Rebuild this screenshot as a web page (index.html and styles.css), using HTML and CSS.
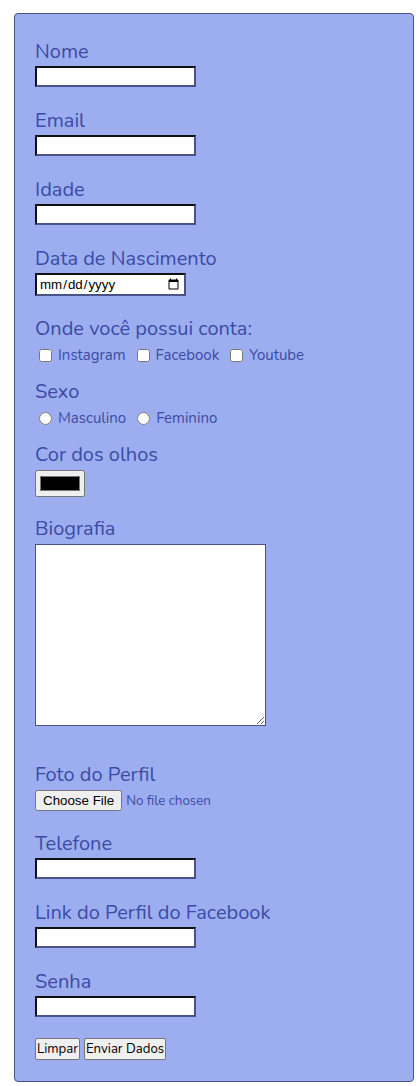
FILE: index.html
```html
<!DOCTYPE html>
<html lang="pt-BR">
<head>
<meta charset="utf-8">
<title>Formulário</title>
<link rel="stylesheet" href="styles.css">
</head>
<body>
<form class="card">
  <div class="field">
    <label class="lbl" for="nome">Nome</label>
    <input class="txt" id="nome" type="text">
  </div>
  <div class="field">
    <label class="lbl" for="email">Email</label>
    <input class="txt" id="email" type="email">
  </div>
  <div class="field">
    <label class="lbl" for="idade">Idade</label>
    <input class="txt" id="idade" type="number">
  </div>
  <div class="field field-date">
    <label class="lbl" for="nasc">Data de Nascimento</label>
    <input class="date" id="nasc" type="date">
  </div>
  <div class="field field-opts">
    <span class="lbl">Onde você possui conta:</span>
    <div class="opts">
      <label class="opt"><input type="checkbox">Instagram</label>
      <label class="opt"><input type="checkbox">Facebook</label>
      <label class="opt"><input type="checkbox">Youtube</label>
    </div>
  </div>
  <div class="field field-opts">
    <span class="lbl">Sexo</span>
    <div class="opts">
      <label class="opt"><input type="radio" name="sexo">Masculino</label>
      <label class="opt"><input type="radio" name="sexo">Feminino</label>
    </div>
  </div>
  <div class="field field-color">
    <label class="lbl" for="cor">Cor dos olhos</label>
    <input class="color" id="cor" type="color" value="#000000">
  </div>
  <div class="field field-bio">
    <label class="lbl" for="bio">Biografia</label>
    <textarea class="bio" id="bio"></textarea>
  </div>
  <div class="field field-file">
    <label class="lbl" for="foto">Foto do Perfil</label>
    <input class="file" id="foto" type="file">
  </div>
  <div class="field">
    <label class="lbl" for="tel">Telefone</label>
    <input class="txt" id="tel" type="tel">
  </div>
  <div class="field">
    <label class="lbl" for="fb">Link do Perfil do Facebook</label>
    <input class="txt" id="fb" type="url">
  </div>
  <div class="field">
    <label class="lbl" for="senha">Senha</label>
    <input class="txt" id="senha" type="password">
  </div>
  <div class="actions">
    <button class="btn" type="reset">Limpar</button>
    <button class="btn" type="submit">Enviar Dados</button>
  </div>
</form>
</body>
</html>
```
FILE: styles.css
```css
html, body {
  margin: 0;
  padding: 0;
  background: #ffffff;
}

body {
  font-family: "Nunito", "Lato", "Noto Sans", sans-serif;
}

.card {
  box-sizing: border-box;
  width: 400px;
  margin: 13px 0 0 14px;
  height: 1069px;
  padding: 24px 20px 0 20px;
  background: #9daef0;
  border: 1px solid #4a5385;
  border-radius: 4px;
  display: flex;
  flex-direction: column;
  color: #3b4ba5;
}

.field {
  display: flex;
  flex-direction: column;
  align-items: flex-start;
  margin-bottom: 20px;
}

.lbl {
  font-size: 20px;
  line-height: 28px;
  color: #3b4ba5;
}

.txt {
  box-sizing: border-box;
  width: 161px;
  height: 21px;
  margin: 0;
  padding: 1px 2px;
  background: #fff;
  border: 2px solid;
  border-color: #111 #4a5385 #4a5385 #111;
  font-size: 13px;
}

.field-date {
  margin-bottom: 19px;
}

.date {
  box-sizing: border-box;
  width: 151px;
  height: 23px;
  margin: 0;
  background: #fff;
  border: 2px solid;
  border-color: #111 #4a5385 #4a5385 #111;
  font-family: "Liberation Sans", Arial, sans-serif;
  font-size: 13.33px;
  padding: 1px 2px;
}

.field-opts {
  margin-bottom: 13px;
}

.opts {
  display: flex;
  align-items: center;
  padding-top: 3px;
}

.opt {
  display: flex;
  align-items: center;
  font-size: 15px;
  line-height: 19px;
  color: #3b4ba5;
  margin-right: 7px;
}

.opt input {
  margin: 3px 6px 3px 4px;
}

.field-color {
  margin-bottom: 18px;
}

.color {
  box-sizing: border-box;
  width: 50px;
  height: 27px;
  margin: 1px 0 0 0;
}

.field-bio {
  margin-bottom: 35px;
}

.bio {
  box-sizing: border-box;
  width: 231px;
  height: 182px;
  margin: 1px 0 0 0;
  background: #fff;
  border: 1px solid #4a5385;
  resize: vertical;
}

.field-file {
  margin-bottom: 19px;
}

.file {
  height: 21px;
  margin: 1px 0 0 0;
  font-family: "Nunito", "Lato", "Noto Sans", sans-serif;
  font-size: 13.33px;
  color: #3b4ba5;
}

.file::file-selector-button {
  font-family: "Liberation Sans", Arial, sans-serif;
  font-size: 13.33px;
  height: 21px;
}

.actions {
  display: flex;
  gap: 4px;
  margin-top: 1px;
}

.btn {
  font-family: "Nunito", "Lato", "Noto Sans", sans-serif;
  font-size: 13.2px;
  height: 22px;
  padding: 1px 1px;
  color: #000;
  background: #efefef;
  border: 1px solid #767676;
  border-radius: 2px;
}
```
